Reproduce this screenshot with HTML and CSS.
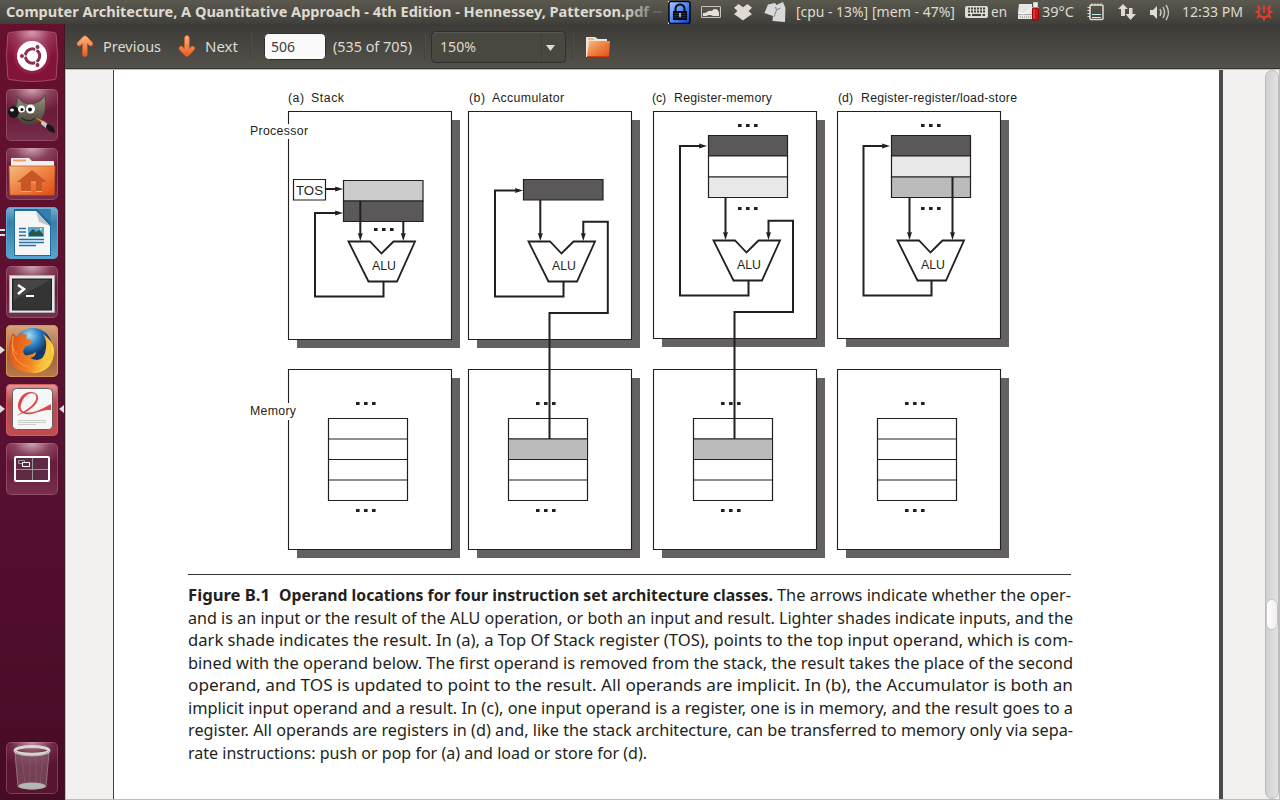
FILE: index.html
```html
<!DOCTYPE html>
<html lang="en">
<head>
<meta charset="utf-8">
<title>Computer Architecture, A Quantitative Approach</title>
<link rel="stylesheet" href="styles.css">
</head>
<body>
<div class="desktop">
<header class="panel">
  <svg class="panel-title" width="662" height="24">
    <defs><linearGradient id="fade" gradientUnits="userSpaceOnUse" x1="620" x2="664" y1="0" y2="0"><stop stop-color="#dfdbd2"/><stop offset="1" stop-color="#dfdbd2" stop-opacity=".15"/></linearGradient></defs>
    <text class="bold" x="6" y="17" textLength="643" lengthAdjust="spacingAndGlyphs" fill="url(#fade)">Computer Architecture, A Quantitative Approach - 4th Edition - Hennessey, Patterson.pdf</text>
    <path d="M653 12h9" stroke="#dfdbd2" stroke-opacity=".35"/>
  </svg>
  <svg class="indicators" width="618" height="24" viewBox="662 0 618 24">
    <defs>
      <linearGradient id="blue" x1="0" y1="0" x2="1" y2="1"><stop stop-color="#a9cbff"/><stop offset=".5" stop-color="#5288f5"/><stop offset="1" stop-color="#0a37df"/></linearGradient>
    </defs>
    <path d="M668 1h3l-3 3zM690 1h-3l3 3zM668 24v-3l3 3z" fill="#fff"/>
    <rect x="669" y="1.500" width="21" height="22" rx="2" fill="url(#blue)" stroke="#06060c" stroke-width="1.500"/>
    <path d="M675.500 12V9a4.500 4.500 0 0 1 9 0v3" fill="none" stroke="#080808" stroke-width="2"/>
    <path d="M673 11h14v9h-14z" fill="#0a0c14"/><path d="M674 13.500h12M674 15.500h12M674 17.500h12" stroke="#183a8a" stroke-width=".7"/><path d="M680 13v4" stroke="#aad0ff" stroke-width="1.600"/>
    <rect x="701.500" y="6.500" width="19" height="11" rx=".5" fill="#55534b" stroke="#c9c6b8"/>
    <path d="M703 16v-3q2.500.500 4.500-1.500 2-1 4.500-.5 1-2.500 4-2 2.500 1 3 3.500V16h-6q-2-1.500-4-1t-3 1z" fill="#e4e1d6"/>
    <path d="M738.500 4l4.500 3.200L747.500 4l4.500 3.700-3.400 3.300 3.400 3.200-3.500 2.300-5.500 4-5.500-4-3.500-2.300 3.400-3.200-3.400-3.300z" fill="#dfdbd2"/>
    <path d="M768 4.500l7-1.500 1.500 2 6.500-3 2.500 6-.5 14-12.500-1 .4-5-8.500-3z" fill="#d8d8d8"/><path d="M774 17l2.500-7 4-2m-4 2-1-3" fill="none" stroke="#777" stroke-width=".9"/>
    <g class="light">
      <text x="796" y="17" textLength="72" lengthAdjust="spacingAndGlyphs">[cpu - 13%]</text>
      <text x="872" y="17" textLength="83" lengthAdjust="spacingAndGlyphs">[mem - 47%]</text>
      <text x="991" y="17" textLength="16" lengthAdjust="spacingAndGlyphs">en</text>
      <text x="1042" y="17" textLength="32" lengthAdjust="spacingAndGlyphs">39°C</text>
      <text x="1182" y="17" textLength="61" lengthAdjust="spacingAndGlyphs">12:33 PM</text>
    </g>
    <rect x="965" y="6" width="23" height="12" rx="2" fill="#dfdbd2"/>
    <path d="M968 8.500h18M968 11.500h18" stroke="#45433d" stroke-width="2" stroke-dasharray="2 1"/><path d="M968 15h2.500m1.500 0h9m1.500 0h2.500" stroke="#45433d" stroke-width="2"/>
    <path d="M1019 4h13v15h-14v-7z" fill="#e5e5e5"/><path d="M1018 14.500h14" stroke="#aaa"/><path d="M1020 17h11" stroke="#888" stroke-dasharray="1 1"/><path d="M1019 13q7 3 12-5" fill="none" stroke="#fff"/>
    <path d="M1033.500 2.500h4v5h1v5h-6v-5h1z" fill="#eee" stroke="#ccc"/><rect x="1032.500" y="8" width="6" height="12" rx="1" fill="#d60e12" stroke="#8f0808"/><path d="M1034 9v10" stroke="#f25a53"/>
    <rect x="1090" y="5" width="13" height="14.500" rx="1" fill="none" stroke="#dfdbd2" stroke-width="1.500"/><path d="M1091 4.500h12" stroke="#dfdbd2" stroke-width="2" stroke-dasharray="1.500 1.500"/><path d="M1087.500 7.500h3m-3 3h3m-3 3h3m-3 3h3" stroke="#dfdbd2" stroke-width="1.200"/><path d="M1092 14.500h9m-9 3h9" stroke="#c5eff2"/>
    <path d="M1123 4l5 5h-3v7h-4V9h-3zM1130.500 20l-5-6h3.500V8h3.500v6h3.500z" fill="#dfdbd2"/>
    <path d="M1150 10h3l4-4v13l-4-4h-3z" fill="#dfdbd2"/><path d="M1160 9q2 3.500 0 7m3-9q3 5.500 0 11m3-13q5 7.500 0 15" fill="none" stroke="#c8c5bc" stroke-width="1.400"/>
    <g stroke="#e43b2d" fill="none"><path d="M1264 5.500v7.500" stroke-width="2"/><path d="M1260.500 7.700a5.500 5.500 0 1 0 7 0" stroke-width="2.200"/><path d="M1264 17v3.500M1259.500 15.500l-2.500 2.500M1268.500 15.500l2.500 2.500M1259 12h-3.500M1269 12h3.500M1260 8.500l-2.500-3M1268 8.500l2.500-3" stroke-width="2"/></g>
  </svg>
</header>
<div class="workspace">
<nav class="launcher">
  <div class="tile dash"><svg viewBox="0 0 52 52"><defs><radialGradient id="gloss" cx=".5" cy="0" r=".65"><stop stop-color="#d8a0b2"/><stop offset=".55" stop-color="#98365a"/><stop offset="1" stop-color="#831337"/></radialGradient></defs><path d="M4 2.500Q26-1.500 48 2.500q2 0 2.200 2 2.600 21.500 0 43-.2 2-2.200 2-22 4-44 0-2 0-2.200-2-2.600-21.500 0-43 .2-2 2.200-2z" fill="url(#gloss)" stroke="#ad5a77" stroke-width=".8"/><circle cx="26" cy="26" r="18" fill="#b8426c" opacity=".3"/><circle cx="26" cy="26" r="15" fill="#fff"/><circle cx="26.500" cy="26" r="7.200" fill="none" stroke="#8d3055" stroke-width="3"/><path d="M26.500 26H16M26.500 26l5 9M26.500 26l5-9" stroke="#fff" stroke-width="1.200"/><circle cx="26.500" cy="26" r="5" fill="#fff"/><g fill="#8d3055" stroke="#fff"><circle cx="16" cy="26" r="2.500"/><circle cx="31.500" cy="17" r="2.500"/><circle cx="31.500" cy="35" r="2.500"/></g></svg></div>
  <div class="tile"><svg viewBox="0 0 52 52"><defs><linearGradient id="fur" x2="0" y2="1"><stop stop-color="#999280"/><stop offset="1" stop-color="#464239"/></linearGradient></defs><path d="M11 7q4 7 12 8 11 0 16-9 2 15-3 23-7 8-16 6-5-1-8-6-7-1-4-10 4-2 3-12z" fill="url(#fur)" stroke="#4c483f"/><ellipse cx="7.500" cy="23" rx="5.500" ry="6" fill="#151617"/><ellipse cx="6" cy="21" rx="2" ry="1.600" fill="#eee"/><circle cx="15.500" cy="20" r="3.500" fill="#fff"/><circle cx="24.500" cy="20" r="4.500" fill="#fff"/><circle cx="16" cy="20.500" r="1.500"/><circle cx="24" cy="20.500" r="1.900"/><path d="M15 29q10 6 15-1" fill="none" stroke="#211f1c"/><path d="M29 28l11 5-2 3z" fill="#eb941f" stroke="#8b540f" stroke-width=".5"/><path d="M36 32l6 3-2 4-5-4z" fill="#ccc"/><path d="M41 35q8 1 8 9-7-1-9-6z" fill="#161616"/></svg></div>
  <div class="tile"><svg viewBox="0 0 52 52"><defs><linearGradient id="orange" x2="1" y2="1"><stop stop-color="#f3bd82"/><stop offset=".5" stop-color="#ed8140"/><stop offset="1" stop-color="#e24b18"/></linearGradient></defs><path d="M5 18V11q0-1 1-1h17l3 3h21q1 0 1 1v5z" fill="#f4efeb"/><path d="M7 12.500h13" stroke="#ef9e64" stroke-width="2"/><path d="M3 18h46l-1 29H4z" fill="url(#orange)" stroke="#cf5a23" stroke-width=".8"/><path d="M26 22l15 12h-5v9.500h-6V34h-5v9.500H15V34h-4z" fill="#c85725"/><path d="M15 43.500h10M30 43.500h6M25 34h5" stroke="#f6ab7c"/></svg></div>
  <div class="tile writer"><svg viewBox="0 0 52 52"><path d="M8 2h33l4 4v43H8z" fill="#1f6b9e"/><path d="M9 4h21l14 15v29H9z" fill="#f5f5f5"/><path d="M30 4l14 15-11-4z" fill="#bbc5cb"/><path d="M31 2h14v14z" fill="#347fac"/><path d="M13 21.500h7m-7 3.500h7m-7 3.500h7m-7 4h25m-25 3h25m-25 3h17" stroke="#2471a5" stroke-width="1.300"/><path d="M22 20h16v10H22z" fill="#55aace"/><path d="M23 29v-3l4-4 3 3 3-2 4 4v2z" fill="#365145"/><circle cx="35" cy="22" r="1" fill="#fff45f"/></svg><i class="double-pip"></i></div>
  <div class="tile"><svg viewBox="0 0 52 52"><rect x="3.500" y="9.500" width="45" height="37" fill="#e5e5e5" stroke="#aaa"/><rect x="6.500" y="13" width="39" height="31" fill="#343434" stroke="#222"/><path d="M8 14h36L8 34z" fill="#555" opacity=".5"/><path d="M12 19l6 4-6 5" fill="none" stroke="#fff" stroke-width="2.500"/><path d="M20 30h8" stroke="#fff" stroke-width="2"/></svg></div>
  <div class="tile firefox"><svg viewBox="0 0 52 52"><defs><radialGradient id="globe" cx=".4" cy=".2"><stop stop-color="#a8def2"/><stop offset=".5" stop-color="#3489cd"/><stop offset="1" stop-color="#123969"/></radialGradient><linearGradient id="flame" x2="1" y2=".2"><stop stop-color="#de4c15"/><stop offset=".6" stop-color="#f18424"/><stop offset="1" stop-color="#f8dc46"/></linearGradient></defs><circle cx="27" cy="22" r="19" fill="url(#globe)"/><path d="M7 8l4 4q4-5 10-2l-1 4q5 0 6 2-1 4-6 5-5 5-1 9 6 1 11-3 0 5-6 6 14 7 16-10 1-8-3-14 9 6 11 15 0 21-18 24Q3 49 3 26q0-11 4-18z" fill="url(#flame)"/><path d="M37 9q9 10 5 20-2 9-14 13 11 0 18-9-6 12-20 15 22-1 22-23-1 2-2 3-1-13-9-19z" fill="#f8c33c"/><path d="M6 20q0 19 18 22M7 11q-2 15 4 18" fill="none" stroke="#f6a04b"/></svg><i class="pip"></i></div>
  <div class="tile reader"><svg viewBox="0 0 52 52"><rect x="6.500" y="4.500" width="40" height="41" rx="4" fill="#f6f6f6" stroke="#665c5c"/><path d="M10 31.500C22 26 32 18 30 12c-1-4-8-4-12 2-5 8-4 13 1 14 8 2 17-3 26-8v6c-11-1-18 6-26 4-8-2-9-10-4-17 5-7 16-6 17 0 1 8-11 16-22 18.500z" fill="#dd4a4e"/><path d="M12 36.500h28m-28 2h28m-28 2h18" stroke="#ccc" stroke-width="1"/></svg><i class="pip"></i><i class="focus-pip"></i></div>
  <div class="tile"><svg viewBox="0 0 52 52"><rect x="9" y="14" width="34" height="24" rx="1" fill="#5e2944" stroke="#fff" stroke-width="2"/><path d="M26.500 15v22M10 26.500h32" stroke="#999"/><path d="M12.500 17.500h6v3h-6z" fill="none" stroke="#999"/><path d="M16.500 19.500h7v4h-7z" fill="#513443" stroke="#fff"/></svg></div>
  <div class="tile trash"><svg viewBox="0 0 52 52"><path d="M9 11l3 34q14 4 28 0l3-34z" fill="#bea6b0" fill-opacity=".3" stroke="#a58d99" stroke-width=".7"/><path d="M16 15l3 27M24 15v27M30 15v27M37 15l-3 27" stroke="#a38393" stroke-opacity=".25"/><ellipse cx="26" cy="44" rx="13.500" ry="3.500" fill="#b3b7b1"/><ellipse cx="26" cy="8.500" rx="17" ry="4" fill="none" stroke="#d5d7d3" stroke-width="3"/><path d="M9 9q3 5 17 5t17-5" fill="none" stroke="#a7aaa4"/></svg></div>
</nav>
<main class="viewer">
  <div class="toolbar">
    <svg width="1215" height="45" viewBox="65 24 1215 45">
      <defs><linearGradient id="arrow" x2="0" y2="1"><stop stop-color="#f8b986"/><stop offset="1" stop-color="#ee5720"/></linearGradient></defs>
      <path id="arrow-up" d="M83.200 36.600q1.800-1.600 3.600 0l5.600 6q1.200 2.400-1 3.200-1.600.4-2.600-.8L87.200 43.300V54q0 2.500-2.300 2.500T82.600 54V43.300L81 45q-1 1.200-2.600.8-2.200-.8-1-3.200z" fill="url(#arrow)" stroke="#e8641f" stroke-width=".7"/>
      <path d="M185.200 55.600q1.800 1.600 3.600 0l5.600-6q1.200-2.400-1-3.200-1.600-.4-2.600.8l-1.600 1.700V38q0-2.500-2.300-2.500t-2.300 2.500v10.900L183 47.200q-1-1.200-2.600-.8-2.200.8-1 3.200z" fill="url(#arrow)" stroke="#e8641f" stroke-width=".7"/>
      <path d="M250.500 34v25M424.500 34v25M572.500 34v25" stroke="#42413b"/><path d="M251.500 34v25M425.500 34v25M573.500 34v25" stroke="#4f4d46"/>
      <rect x="264.500" y="33.500" width="61" height="26" rx="4" fill="#fafafa" stroke="#302f2b"/><text class="page-number" x="271" y="52" textLength="24" lengthAdjust="spacingAndGlyphs">506</text>
      <rect x="431.500" y="31.500" width="134" height="31" rx="4" fill="#484740" stroke="#302f2b"/><path d="M434 32.500h129" stroke="#59574f"/><path d="M541.500 35v24" stroke="#3d3c37"/><path d="M546 45h9l-4.500 6z" fill="#dfdbd2"/>
      <g class="light"><text x="103" y="52" textLength="58" lengthAdjust="spacingAndGlyphs">Previous</text><text x="205" y="52" textLength="33" lengthAdjust="spacingAndGlyphs">Next</text><text x="333" y="52" textLength="79" lengthAdjust="spacingAndGlyphs">(535 of 705)</text><text x="440" y="52" textLength="36" lengthAdjust="spacingAndGlyphs">150%</text></g>
      <path d="M586 57V37h9l3 2h9v18z" fill="#eee5dc"/><path d="M588 39h6" stroke="#ef8a50"/><path d="M589 41h21l-1 16h-22z" fill="url(#orange)"/><path d="M587 56.500h22" stroke="#d7360e"/>
    </svg>
  </div>
  <div class="document">
    <article class="page">
      <svg class="figure" width="800" height="491" viewBox="240 80 800 491">
        <defs>
          <path id="alu" d="M348.500 241.500H370l11.500 12 12-12H415l-18 40h-28.500z" fill="#fff" stroke="#231f20" stroke-width="1.800"/>
          <g id="dots" fill="#231f20"><path d="M0 0h3.600v3H0zM8 0h3.600v3H8zM16 0h3.600v3H16z"/></g>
          <path id="down" d="M-2.500-8L0 0l2.500-8q-2.500 1-5 0z" fill="#231f20"/>
          <path id="right" d="M-8-2.500L0 0l-8 2.500q1-2.500 0-5z" fill="#231f20"/>
          <g id="memory"><path d="M297 378h163v180H297z" fill="#636162"/><path d="M288.500 369.500h163v180h-163z" fill="#fff" stroke="#231f20" stroke-width="1.100"/><path d="M328.500 418.500h79v82h-79zM328.500 439h79M328.500 459.500h79M328.500 480h79" fill="none" stroke="#231f20" stroke-width="1.200"/><use href="#dots" x="356" y="402"/><use href="#dots" x="356" y="509"/></g>
          <g id="cpu"><path d="M297 120h163v228H297z" fill="#636162"/><path d="M288.500 111.500h163v228h-163z" fill="#fff" stroke="#231f20" stroke-width="1.100"/></g>
          <g id="cpu-short"><path d="M297 120h163v227H297z" fill="#636162"/><path d="M288.500 111.500h163v227h-163z" fill="#fff" stroke="#231f20" stroke-width="1.100"/></g>
        </defs>
        <use href="#cpu"/><use href="#cpu" x="180"/><use href="#cpu-short" x="365"/><use href="#cpu-short" x="549"/>
        <use href="#memory"/><use href="#memory" x="180"/><use href="#memory" x="365"/><use href="#memory" x="549"/>
        <path d="M286 124h5v15h-5zM286 403h5v17h-5z" fill="#fff"/>
        <path d="M508.500 439h79v20.500h-79zM693.500 439h79v20.500h-79z" fill="#bbb" stroke="#231f20"/>
        <g stroke="#231f20" stroke-width="1.200"><path d="M293.500 179.500h32V200h-32z" fill="#fff"/><path d="M343.500 180.500h79.500V201h-79.500z" fill="#cbcbcb"/><path d="M343.500 201h79.500v20.500h-79.500zM523.500 179.500h79.500v20.500h-79.500zM708.500 135.500h79V156h-79zM891.500 135.500h79V156h-79z" fill="#5a5859"/><path d="M708.500 156h79v21h-79z" fill="#fff"/><path d="M708.500 177h79v20.500h-79zM891.500 156h79v21h-79z" fill="#e8e8e8"/><path d="M891.500 177h79v20.500h-79z" fill="#bbb"/></g>
        <g fill="none" stroke="#231f20" stroke-width="2">
          <path d="M326 189h12M383.500 282v14.500H315V213h23M360.300 201v34M403.300 222v13"/>
          <path d="M563.500 282v14.500H495V190.500H518M540.300 200v35M583.300 235v-13.200h24.500V313h-58.300v126"/>
          <path d="M748.500 281v14.500H680V146H703M725.500 197v37M768.500 234v-13.200h24.500V312h-58.500v127"/>
          <path d="M931.500 281v14.500h-68V146H887M909.500 197v37M952.500 177v57"/>
        </g>
        <use href="#alu"/><use href="#alu" x="180"/><use href="#alu" x="365" y="-1"/><use href="#alu" x="549" y="-1"/>
        <use href="#right" x="343" y="189"/><use href="#right" x="343" y="213"/><use href="#right" x="523" y="190.500"/><use href="#right" x="707" y="146"/><use href="#right" x="890" y="146"/>
        <use href="#down" x="360.300" y="241"/><use href="#down" x="403.300" y="241"/><use href="#down" x="540.300" y="241"/><use href="#down" x="583.300" y="241"/><use href="#down" x="725.500" y="240"/><use href="#down" x="768.500" y="240"/><use href="#down" x="909.500" y="240"/><use href="#down" x="952.500" y="240"/>
        <use href="#dots" x="374" y="228"/><use href="#dots" x="738" y="124"/><use href="#dots" x="738" y="207"/><use href="#dots" x="921" y="124"/><use href="#dots" x="921" y="207"/>
        <g class="diagram-text">
          <text x="288" y="102" textLength="16">(a)</text><text x="311" y="102" textLength="33">Stack</text>
          <text x="469" y="102" textLength="16">(b)</text><text x="492" y="102" textLength="72">Accumulator</text>
          <text x="652" y="102" textLength="14">(c)</text><text x="674" y="102" textLength="98">Register-memory</text>
          <text x="838" y="102" textLength="15">(d)</text><text x="861" y="102" textLength="156">Register-register/load-store</text>
          <text x="250" y="135" textLength="58">Processor</text><text x="250" y="415" textLength="46">Memory</text><text x="296" y="195" textLength="27" lengthAdjust="spacingAndGlyphs">TOS</text>
          <text x="372" y="270" textLength="24">ALU</text><text x="552" y="270" textLength="24">ALU</text><text x="737" y="269" textLength="24">ALU</text><text x="921" y="269" textLength="24">ALU</text>
        </g>
      </svg>
      <svg class="caption" width="1020" height="205" viewBox="186 571 1020 205">
        <path d="M188 574.500h883" stroke="#333"/>
        <text class="bold" x="188" y="601" textLength="82" lengthAdjust="spacingAndGlyphs">Figure B.1</text>
        <text class="bold" x="279" y="601" textLength="494" lengthAdjust="spacingAndGlyphs">Operand locations for four instruction set architecture classes.</text>
        <text x="777" y="601" textLength="294" lengthAdjust="spacingAndGlyphs">The arrows indicate whether the oper-</text>
        <text x="188" y="623.500" textLength="885" lengthAdjust="spacingAndGlyphs">and is an input or the result of the ALU operation, or both an input and result. Lighter shades indicate inputs, and the</text>
        <text x="188" y="646" textLength="885" lengthAdjust="spacingAndGlyphs">dark shade indicates the result. In (a), a Top Of Stack register (TOS), points to the top input operand, which is com-</text>
        <text x="188" y="668.500" textLength="885" lengthAdjust="spacingAndGlyphs">bined with the operand below. The first operand is removed from the stack, the result takes the place of the second</text>
        <text x="188" y="691" textLength="885" lengthAdjust="spacingAndGlyphs">operand, and TOS is updated to point to the result. All operands are implicit. In (b), the Accumulator is both an</text>
        <text x="188" y="714" textLength="885" lengthAdjust="spacingAndGlyphs">implicit input operand and a result. In (c), one input operand is a register, one is in memory, and the result goes to a</text>
        <text x="188" y="736" textLength="885" lengthAdjust="spacingAndGlyphs">register. All operands are registers in (d) and, like the stack architecture, can be transferred to memory only via sepa-</text>
        <text x="188" y="759" textLength="459" lengthAdjust="spacingAndGlyphs">rate instructions: push or pop for (a) and load or store for (d).</text>
      </svg>
    </article>
    <div class="scrollbar"><div class="thumb"></div></div>
  </div>
</main>
</div>
</div>
</body>
</html>
```

FILE: styles.css
```css
* { box-sizing: border-box; }
body { margin: 0; font-family: "Noto Sans", sans-serif; }
svg { display: block; }
.desktop { width: 1280px; height: 800px; overflow: hidden; display: flex; flex-direction: column; }
.panel { height: 24px; flex: none; display: flex; background: linear-gradient(#5b594f, #403f3a); font-size: 14px; }
.panel svg { flex: none; }
.panel-title { overflow: visible; }
.bold { font-weight: 700; }
.light { fill: #dfdbd2; }
.workspace { height: 776px; display: flex; }
.launcher { width: 65px; flex: none; padding: 6px 7px 6px 6px; display: flex; flex-direction: column; gap: 7px; background: linear-gradient(#65102d, #581031 55%, #460b25); border-right: 1px solid #3c1727; }
.tile { position: relative; width: 52px; height: 52px; flex: none; border-radius: 5px; background: radial-gradient(ellipse 36px 24px at 50% 0, #d0aab7, rgba(160, 95, 120, .55) 50%, transparent), linear-gradient(#6d1f3e, #6a1c3b 50%, #75304d); box-shadow: inset 0 0 0 1px rgba(210, 130, 160, .35); }
.tile > svg { width: 52px; height: 52px; }
.tile.dash { background: none; box-shadow: none; }
.tile.writer { background: linear-gradient(#76b2d4, #397fab 30%, #59a4d0); box-shadow: inset 0 0 0 1px #58a6cf; }
.tile.firefox { background: linear-gradient(#d5a47d, #a4643e 60%, #ba794c); box-shadow: inset 0 0 0 1px #d8934d; }
.tile.reader { background: linear-gradient(#df9a9b, #b84b50 35%, #c14c50); box-shadow: inset 0 0 0 1px #d55d60; }
.tile.trash { margin-top: auto; background: radial-gradient(ellipse 38px 26px at 50% 0, #c397a6, rgba(130, 60, 90, .5) 55%, transparent), #581531; }
.pip { position: absolute; left: -6px; top: 21px; border-left: 5px solid #ddd; border-top: 4px solid transparent; border-bottom: 4px solid transparent; }
.focus-pip { position: absolute; right: -6px; top: 21px; border-right: 5px solid #ddd; border-top: 4px solid transparent; border-bottom: 4px solid transparent; }
.double-pip { position: absolute; left: -6px; top: 22px; width: 5px; height: 7px; border: solid #ddd; border-width: 2px 0; }
.viewer { width: 1215px; }
.toolbar { height: 45px; background: linear-gradient(#3c3b37, #53514a); border-bottom: 1px solid #35342f; font-size: 14px; }
.page-number { fill: #3c3c3c; }
.document { height: 731px; display: flex; background: #f2f1f0; border: 1px solid #c0bdb9; padding-left: 47px; }
.page { width: 1110px; flex: none; background: #fff; border-left: 1px solid #404040; border-right: 4px solid #4b4b4b; padding-top: 10px; }
.figure { margin-left: 126px; }
.caption { margin-left: 72px; font-size: 16.5px; fill: #231f20; }
.diagram-text { font: 12.3px "Liberation Sans", sans-serif; fill: #231f20; }
.scrollbar { width: 14px; margin-left: 42px; flex: none; border: 1px solid #bdbab7; border-radius: 7px; background: linear-gradient(90deg, #d0d0d0, #e3e3e3); padding-top: 528px; }
.thumb { height: 31px; border-radius: 7px; background: linear-gradient(90deg, #fff, #efedef); border: 1px solid #c9c5c4; }
```
